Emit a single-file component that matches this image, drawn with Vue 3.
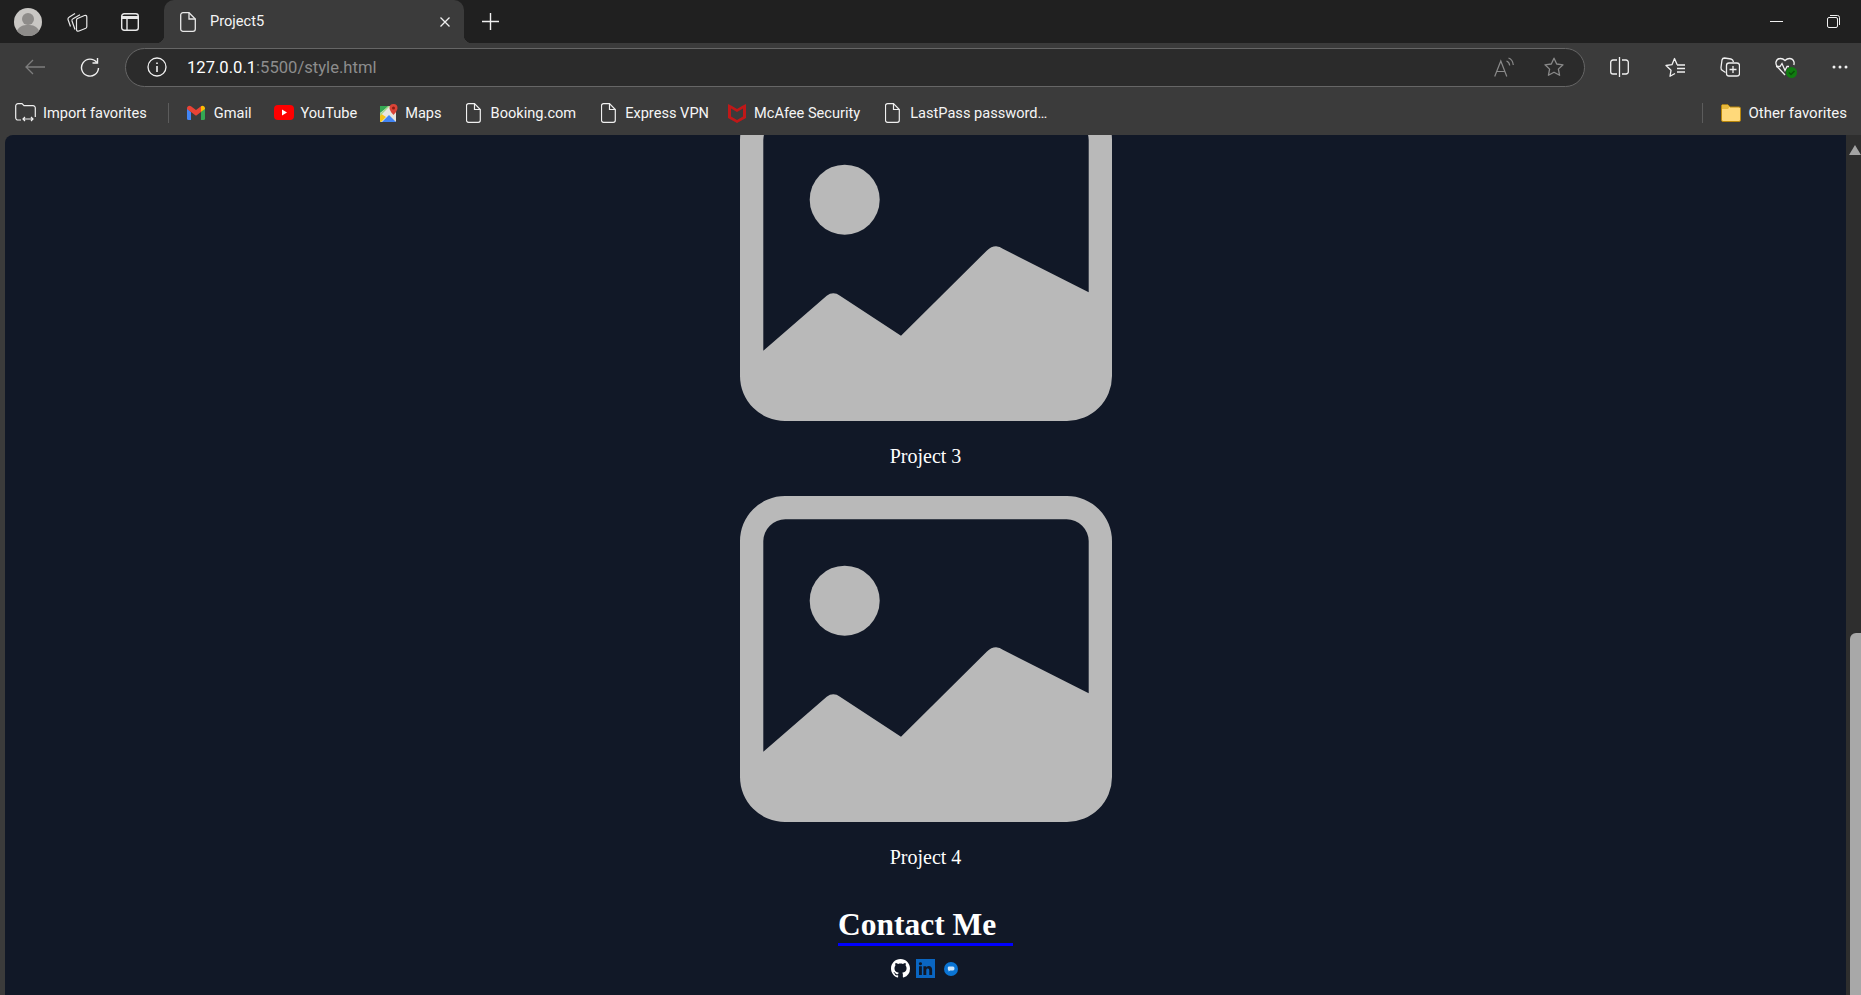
<script setup>
const projects = ['Project 3', 'Project 4']
const bookmarks = [
  { label: 'Booking.com', cls: 'b-booking' },
  { label: 'Express VPN', cls: 'b-express' }
]
</script>

<template>
  <div class="window">
    <header class="tabstrip">
      <div class="avatar">
        <svg width="28" height="28" viewBox="0 0 28 28"><circle cx="14" cy="14" r="14" fill="#c9c7c4"/><circle cx="14" cy="11" r="6" fill="#8e8c8a"/><path d="M3 23c2-5 6-6 11-6s9 1 11 6a14 14 0 0 1-22 0z" fill="#8e8c8a"/></svg>
      </div>
      <svg class="t-actions" width="21" height="20" viewBox="0 0 21 20" fill="none" stroke="#e8e8e8" stroke-width="1.200" stroke-linejoin="round"><path d="M3.500 14.500 1 7.500Q.7 6 2 5.300L8 1.500"/><path d="M8 17.500 5 9Q4.600 7.500 6 6.800L13 2.800"/><path d="M9.500 8Q9.500 7 10.500 6.500L17.500 3.500Q19.800 3 19.800 5V14.500Q19.800 15.700 18.800 16.200L12 19Q9.500 19.600 9.500 17.500z"/></svg>
      <svg class="t-vertical" width="18" height="18" viewBox="0 0 18 18" fill="none" stroke="#e8e8e8" stroke-width="1.400"><rect x=".7" y=".7" width="16.600" height="16.600" rx="2.500"/><path d="M1 4.500h16" stroke-width="3"/><path d="M6 5v12"/></svg>
      <div class="tab">
        <svg width="16" height="20" viewBox="0 0 16 20" fill="none" stroke="#e8e8e8" stroke-width="1.300"><path d="M3 .7h6l6.300 6.300v10a2.300 2.300 0 0 1-2.300 2.300H3A2.300 2.300 0 0 1 .7 17V3A2.300 2.300 0 0 1 3 .7z"/><path d="M9 .7V7h6.300"/></svg>
        <span class="tab-title">Project5</span>
        <svg class="tab-close" width="10" height="10" viewBox="0 0 10 10" stroke="#f0f0f0" stroke-width="1.300"><path d="M.5.5l9 9M9.500.5l-9 9"/></svg>
      </div>
      <svg class="t-plus" width="17" height="17" viewBox="0 0 17 17" stroke="#f0f0f0" stroke-width="1.400"><path d="M8.500 0v17M0 8.500h17"/></svg>
      <div class="window-controls">
        <svg width="13" height="13" viewBox="0 0 13 13" stroke="#f0f0f0" stroke-width="1"><path d="M0 6.500h13"/></svg>
        <svg width="13" height="13" viewBox="0 0 13 13" fill="none" stroke="#f0f0f0" stroke-width="1"><rect x=".5" y="2.500" width="10" height="10" rx="1.500"/><path d="M3 .5h7.500a2 2 0 0 1 2 2V10"/></svg>
      </div>
    </header>

    <div class="toolbar">
      <svg class="tb-back" width="20" height="16" viewBox="0 0 20 16" fill="none" stroke="#7d7d7d" stroke-width="1.300"><path d="M20 8H1M8 1 1 8l7 7"/></svg>
      <svg class="tb-refresh" width="20" height="20" viewBox="0 0 20 20" fill="none" stroke="#f0f0f0" stroke-width="1.400"><path d="M16.800 5.500A8.500 8.500 0 1 0 18.500 11"/><path d="M17.500 1v5h-5"/></svg>
      <div class="address">
        <svg width="20" height="20" viewBox="0 0 20 20" fill="none" stroke="#f0f0f0" stroke-width="1.300"><circle cx="10" cy="10" r="9"/><path d="M10 9v6M10 5.500v1.500" stroke-width="1.600"/></svg>
        <span class="url"><span class="url-host">127.0.0.1</span>:5500/style.html</span>
        <svg class="a-read" width="20" height="20" viewBox="0 0 20 20" fill="none" stroke="#8a8a8a" stroke-width="1.200"><path d="M.7 19.500 6.800 4l6 15.500M2.700 14.500h8.300"/><path d="M12.500 4q2.800 1 3.200 4.500M14.500 1q4.300 1.500 4.800 7"/></svg>
        <svg class="a-star" width="20" height="20" viewBox="0 0 20 20" fill="none" stroke="#8a8a8a" stroke-width="1.300"><path d="m10 1.200 2.700 5.800 6.300.8-4.600 4.300 1.200 6.200L10 15.200l-5.600 3.100 1.200-6.200L1 7.800l6.300-.8z" stroke-linejoin="round"/></svg>
      </div>
      <svg class="tb-split" width="19" height="20" viewBox="0 0 19 20" fill="none" stroke="#f0f0f0" stroke-width="1.300"><path d="M7 3H3a2.300 2.300 0 0 0-2.300 2.300v9.400A2.300 2.300 0 0 0 3 17h4M12 3h4a2.300 2.300 0 0 1 2.300 2.300v9.400A2.300 2.300 0 0 1 16 17h-4M9.500 0v20"/></svg>
      <svg class="tb-fav" width="20" height="20" viewBox="0 0 20 20" fill="none" stroke="#f0f0f0" stroke-width="1.300" stroke-linejoin="round"><path d="M10 16.500 5 19.300l1-6L1 8.500l6-.8L9.500 1.500l2.700 6.200"/><path d="M12 8h8M12 11.500h8M12 15h8"/></svg>
      <svg class="tb-coll" width="20" height="20" viewBox="0 0 20 20" fill="none" stroke="#f0f0f0" stroke-width="1.300"><path d="M5.500 15.500 2.500 13.500Q.8 12.500 1 10.500L2 3q.5-2 2.500-2L11 2q2 .5 2.500 3"/><rect x="6.500" y="6" width="13" height="13" rx="2.500"/><path d="M13 9v7M9.500 12.500h7"/></svg>
      <svg class="tb-health" width="22" height="21" viewBox="0 0 22 21" fill="none" stroke="#f0f0f0" stroke-width="1.300"><path d="M10 18 2.500 10Q.5 7.500 1 5q1-3.500 4.500-3.500Q8 1.500 10 3.500q2-2 4.500-2Q18 1.500 19 5q.3 1.500-.2 3"/><path d="M1 9.500h4l2-3 3 7 2-4h2"/><circle cx="16.500" cy="15.500" r="5.500" fill="#107c10" stroke="none"/><path d="m14 15.500 2 2 3.500-3.500" stroke="#0b4f0b" stroke-width="1.500"/></svg>
      <svg class="tb-more" width="16" height="4" viewBox="0 0 16 4" fill="#f0f0f0"><circle cx="2" cy="2" r="1.500"/><circle cx="8" cy="2" r="1.500"/><circle cx="14" cy="2" r="1.500"/></svg>
    </div>

    <nav class="favbar">
      <div class="fav f-import">
        <svg width="21" height="19" viewBox="0 0 21 19" fill="none" stroke="#f0f0f0" stroke-width="1.200"><path d="M6 17H3a2.300 2.300 0 0 1-2.300-2.300V3A2.300 2.300 0 0 1 3 .7h4l2 2h9a2.300 2.300 0 0 1 2.300 2.300v9"/><path d="M8 16h10M10 14l-2 2 2 2M16 14l2 2-2 2"/></svg>
        <span>Import favorites</span>
      </div>
      <span class="sep"></span>
      <div class="fav f-gmail">
        <svg width="18" height="15" viewBox="0 0 18 15"><path d="M0 3.500V13.500A1.500 1.500 0 0 0 1.500 15H4V7z" fill="#4285f4"/><path d="M14 15h2.500A1.500 1.500 0 0 0 18 13.500V3.500L14 7z" fill="#34a853"/><path d="M0 3.500C0 1 2.500 0 4 1.200L9 5l5-3.800V7L9 10.800 4 7 0 4z" fill="#ea4335"/><path d="M14 1.200C15.500 0 18 1 18 3.500V4L14 7z" fill="#fbbc04"/></svg>
        <span>Gmail</span>
      </div>
      <div class="fav f-yt">
        <svg width="20" height="15" viewBox="0 0 20 15"><rect width="20" height="15" rx="4" fill="#f00"/><path d="m8 4.500 5 3-5 3z" fill="#fff"/></svg>
        <span>YouTube</span>
      </div>
      <div class="fav f-maps">
        <svg width="18" height="18" viewBox="0 0 18 18"><rect y="2" width="16" height="16" rx="1" fill="#e8e6df"/><path d="M0 18V9l6 4-5 5z" fill="#f5c518"/><path d="M0 2h9L0 9z" fill="#34a853"/><path d="M2 18 9 11l7 7z" fill="#4285f4"/><path d="M8 2 0 10v2L10 2z" fill="#a6d88a"/><path d="M13.500 0a4 4 0 0 0-4 4c0 3 4 7 4 7s4-4 4-7a4 4 0 0 0-4-4z" fill="#db4437"/><circle cx="13.500" cy="4" r="1.500" fill="#8c1c13"/></svg>
        <span>Maps</span>
      </div>
      <div v-for="b in bookmarks" :key="b.label" class="fav file" :class="b.cls">
        <svg width="15" height="20" viewBox="0 0 15 20" fill="none" stroke="#f0f0f0" stroke-width="1.200"><path d="M2.500.7h6l5.800 5.800v10.800a2 2 0 0 1-2 2h-9.800a2 2 0 0 1-2-2V2.700a2 2 0 0 1 2-2z"/><path d="M8.500.7v5.800h5.800"/></svg>
        <span>{{ b.label }}</span>
      </div>
      <div class="fav f-mcafee">
        <svg width="18" height="20" viewBox="0 0 18 20"><path fill-rule="evenodd" d="M0 1l4 2 5 3 5-3 4-2v14l-9 5-9-5zm3 4.500v8L9 17l6-3.500v-8L9 9z" fill="#c01818"/></svg>
        <span>McAfee Security</span>
      </div>
      <div class="fav file f-lastpass">
        <svg width="15" height="20" viewBox="0 0 15 20" fill="none" stroke="#f0f0f0" stroke-width="1.200"><path d="M2.500.7h6l5.800 5.800v10.800a2 2 0 0 1-2 2h-9.800a2 2 0 0 1-2-2V2.700a2 2 0 0 1 2-2z"/><path d="M8.500.7v5.800h5.800"/></svg>
        <span>LastPass password…</span>
      </div>
      <span class="sep sep-right"></span>
      <div class="fav f-other">
        <svg width="20" height="18" viewBox="0 0 20 18"><path d="M1 .8h6l2 2.200h9a1.500 1.500 0 0 1 1.500 1.500V16a1.500 1.500 0 0 1-1.500 1.500H2A1.500 1.500 0 0 1 .5 16V2A1.500 1.500 0 0 1 1 .8z" fill="#ffd97a" stroke="#b8860b"/><path d="M1 1h6l1.500 2L7 5H1z" fill="#e8b93c"/></svg>
        <span>Other favorites</span>
      </div>
    </nav>

    <div class="viewport">
      <main class="page">
        <figure v-for="p in projects" :key="p" class="project">
          <svg class="shot" width="372" height="326" viewBox="0 0 372 326">
            <path fill="#b9b9b9" fill-rule="evenodd" d="M45 0H327A45 45 0 0 1 372 45V281A45 45 0 0 1 327 326H45A45 45 0 0 1 0 281V45A45 45 0 0 1 45 0ZM23.300 255.700 86.700 200.700Q93.300 196 100 200.700L161 240.700 246.700 155.700Q255 148 263.300 154L348.700 197.300V45A22 22 0 0 0 326.700 23.300H45.300A22 22 0 0 0 23.300 45Z"/>
            <circle cx="104.700" cy="104.700" r="35" fill="#b9b9b9"/>
          </svg>
          <figcaption>{{ p }}</figcaption>
        </figure>
        <section class="contact">
          <h2>Contact Me</h2>
          <div class="socials">
            <svg width="19" height="19" viewBox="0 0 16 16"><path fill="#fff" fill-rule="evenodd" d="M8 0C3.580 0 0 3.580 0 8c0 3.540 2.290 6.530 5.470 7.590.4.07.55-.17.55-.38 0-.19-.01-.82-.01-1.490-2.010.37-2.530-.49-2.690-.94-.09-.23-.48-.94-.82-1.130-.28-.15-.68-.52-.01-.53.63-.01 1.080.58 1.230.82.72 1.210 1.870.87 2.330.66.07-.52.28-.87.51-1.070-1.780-.2-3.640-.89-3.640-3.950 0-.87.31-1.590.82-2.150-.08-.2-.36-1.020.08-2.120 0 0 .67-.21 2.200.82.64-.18 1.320-.27 2-.27.68 0 1.360.09 2 .27 1.530-1.040 2.200-.82 2.200-.82.44 1.100.16 1.920.08 2.120.51.56.82 1.270.82 2.150 0 3.070-1.870 3.750-3.650 3.950.29.25.54.73.54 1.480 0 1.070-.01 1.930-.01 2.200 0 .21.15.46.55.38A8.013 8.013 0 0 0 16 8c0-4.420-3.580-8-8-8z"/></svg>
            <svg width="19" height="19" viewBox="0 0 16 16"><path fill="#0a66c2" fill-rule="evenodd" d="M0 0h16v16H0zm4.943 13.394V6.169H2.542v7.225zm-1.200-8.212c.837 0 1.358-.554 1.358-1.248-.015-.709-.52-1.248-1.342-1.248-.822 0-1.359.54-1.359 1.248 0 .694.521 1.248 1.327 1.248zm4.908 8.212V9.359c0-.216.016-.432.08-.586.173-.431.568-.878 1.232-.878.869 0 1.216.662 1.216 1.634v3.865h2.401V9.250c0-2.220-1.184-3.252-2.764-3.252-1.274 0-1.845.7-2.165 1.193V6.169h-2.400c.03.678 0 7.225 0 7.225z"/></svg>
            <svg class="s-third" width="14" height="14" viewBox="0 0 14 14"><circle cx="7" cy="7" r="7" fill="#0a74d4"/><path d="M3.800 5.500Q3.800 4.500 5 4.500H9Q10.500 4.500 10.500 6.500 10.500 8.500 9 8.500H6L4.500 9.500V8.300Q3.800 8 3.800 7z" fill="#cfe6fb"/></svg>
          </div>
        </section>
      </main>
      <div class="scrollbar">
        <span class="sb-arrow"></span>
        <span class="sb-thumb"></span>
      </div>
    </div>
  </div>
</template>

<style scoped>
.window {
  width: 1861px;
  height: 995px;
  display: flex;
  flex-direction: column;
  overflow: hidden;
  background: #3b3b3b;
  font-family: Roboto, "Noto Sans", sans-serif;
  color: #f5f5f5;
}
svg { display: block; flex: none; }

.tabstrip {
  height: 43px;
  flex: none;
  display: flex;
  align-items: center;
  background: #202020;
  padding-left: 14px;
}
.t-actions { margin-left: 25px; }
.t-vertical { margin-left: 33px; }
.tab {
  position: relative;
  width: 300px;
  height: 43px;
  margin-left: 25px;
  padding: 0 14px 0 16px;
  box-sizing: border-box;
  display: flex;
  align-items: center;
  background: #3b3b3b;
  border-radius: 10px 10px 0 0;
  font-size: 14.6px;
}
.tab::before,
.tab::after {
  content: "";
  position: absolute;
  bottom: 0;
  width: 8px;
  height: 8px;
}
.tab::before {
  left: -8px;
  background: radial-gradient(circle at 0 0, transparent 8px, #3b3b3b 8.5px);
}
.tab::after {
  right: -8px;
  background: radial-gradient(circle at 100% 0, transparent 8px, #3b3b3b 8.5px);
}
.tab-title { margin: 0 0 2px 14px; }
.tab-close { margin-left: auto; }
.t-plus { margin-left: 18px; }
.window-controls {
  margin-left: auto;
  display: flex;
  gap: 44px;
  padding-right: 21px;
}

.toolbar {
  height: 47px;
  flex: none;
  display: flex;
  align-items: center;
  padding: 1px 13px 0 25px;
  box-sizing: border-box;
}
.tb-refresh { margin-left: 35px; }
.address {
  width: 1460px;
  height: 39px;
  margin-left: 25px;
  padding: 0 20px 0 21px;
  box-sizing: border-box;
  display: flex;
  align-items: center;
  background: #2b2b2b;
  border: 1px solid #666;
  border-radius: 20px;
}
.url {
  margin-left: 20px;
  font-size: 16.6px;
  color: #8d8d8d;
}
.url-host { color: #fff; }
.a-read { margin-left: auto; }
.a-star { margin-left: 30px; }
.tb-split { margin-left: 25px; }
.tb-fav { margin-left: 36px; }
.tb-coll { margin-left: 35px; }
.tb-health { margin-left: 35px; }
.tb-more { margin-left: 35px; }

.favbar {
  height: 45px;
  flex: none;
  display: flex;
  align-items: center;
  padding: 0 14px 0 15px;
  box-sizing: border-box;
  font-size: 14.6px;
  color: #f5f5f5;
}
.fav { display: flex; align-items: center; gap: 7px; white-space: nowrap; }
.file { gap: 10px; }
.b-express { gap: 9px; }
.f-gmail { gap: 9px; }
.f-mcafee { gap: 8px; }
.f-other { font-size: 15px; }
.sep { width: 1px; height: 20px; background: #5c5c5c; margin-left: 21px; }
.sep-right { margin-left: auto; }
.f-gmail { margin-left: 18px; }
.f-yt { margin-left: 22px; }
.f-maps { margin-left: 23px; }
.b-booking { margin-left: 24px; }
.b-express { margin-left: 25px; }
.f-mcafee { margin-left: 19px; }
.f-lastpass { margin-left: 25px; }
.f-other { margin-left: 18px; }

.viewport {
  flex: 1;
  min-height: 0;
  display: flex;
  padding-left: 5px;
}
.page {
  flex: 1;
  min-width: 0;
  display: flex;
  flex-direction: column;
  justify-content: flex-end;
  align-items: center;
  overflow: hidden;
  background: #111827;
  border-top-left-radius: 8px;
  color: #fff;
  font-family: "Liberation Serif", "Times New Roman", serif;
}
.project {
  flex: none;
  margin: 0 0 28px;
  display: flex;
  flex-direction: column;
  align-items: center;
}
.project figcaption {
  margin-top: 24px;
  font-size: 20px;
  line-height: 23px;
}
.contact {
  flex: none;
  margin-top: 9px;
  display: flex;
  flex-direction: column;
  align-items: center;
  padding-bottom: 17px;
}
.contact h2 {
  margin: 0;
  width: 175px;
  font-size: 31.5px;
  line-height: 37px;
  border-bottom: 3px solid #00f;
  text-align: left;
}
.socials {
  margin: 13px 2px 0 0;
  display: flex;
  align-items: center;
  gap: 6px;
}
.s-third { margin-left: 3px; }

.scrollbar {
  width: 15px;
  flex: none;
  position: relative;
  background: #2e2e2e;
}
.sb-arrow {
  position: absolute;
  top: 10px;
  left: 3px;
  width: 0;
  height: 0;
  border-left: 6px solid transparent;
  border-right: 6px solid transparent;
  border-bottom: 10px solid #a3a3a3;
}
.sb-thumb {
  position: absolute;
  top: 498px;
  left: 4px;
  right: 0;
  bottom: 0;
  background: #a8a8a8;
  border-radius: 6px 0 0 0;
}
</style>
